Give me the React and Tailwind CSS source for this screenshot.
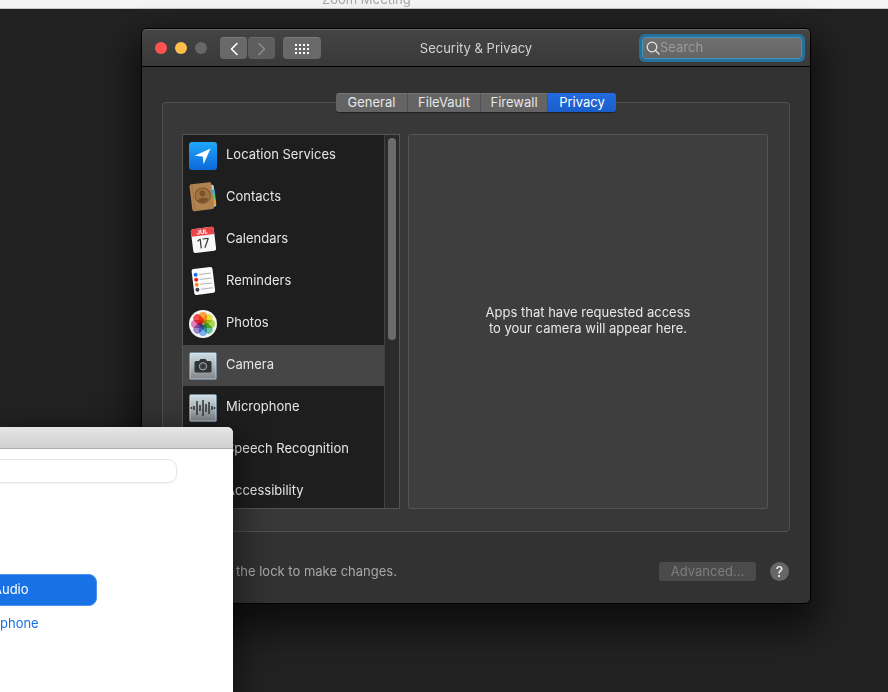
const LocationIcon = () => (
  <svg viewBox="0 0 28 28" className="w-7 h-7">
    <defs>
      <linearGradient id="loc" x1="0" y1="0" x2="0" y2="1">
        <stop offset="0" stopColor="#1fa8f8" />
        <stop offset="1" stopColor="#0c68dc" />
      </linearGradient>
    </defs>
    <rect width="28" height="28" rx="3" fill="url(#loc)" />
    <path d="M21.5 6.5 L5.5 13.8 L13.7 14.4 L14.6 22.2 Z" fill="#fff" />
  </svg>
);

const ContactsIcon = () => (
  <svg viewBox="0 0 28 28" className="w-7 h-7 overflow-visible">
    <g transform="rotate(-7 14 14)">
      <rect x="20" y="2" width="6" height="22" rx="1.5" fill="#c9d3d8" />
      <rect x="23" y="7" width="3.5" height="5" fill="#36a9e0" />
      <rect x="23" y="12" width="3.5" height="5" fill="#5ec45a" />
      <rect x="23" y="17" width="3.5" height="5" fill="#f09a2b" />
      <rect x="2" y="-1" width="22" height="27" rx="2" fill="#b08250" />
      <path d="M4.5 -1 V26" stroke="#a17645" strokeWidth="1" />
      <circle cx="14" cy="11.5" r="7.6" fill="#a2743f" stroke="#79532c" strokeWidth="1" />
      <circle cx="14" cy="9.4" r="3" fill="#79532c" />
      <path d="M8.5 16 C10 13 18 13 19.5 16 C17 19.3 11 19.3 8.5 16 Z" fill="#79532c" />
    </g>
  </svg>
);

const CalendarIcon = () => (
  <svg viewBox="0 0 28 28" className="w-7 h-7 overflow-visible">
    <g transform="rotate(-7 14 14)">
      <rect x="3" y="2" width="23" height="24" rx="2" fill="#f8f8f8" />
      <path d="M3 9.5 V4 A2 2 0 0 1 5 2 H24 A2 2 0 0 1 26 4 V9.5 Z" fill="#ec4548" />
      <text x="14" y="8" fontSize="6" fontWeight="700" textAnchor="middle" fill="#fff">JUL</text>
      <text x="14" y="22" fontSize="13" fontWeight="400" textAnchor="middle" fill="#333">17</text>
    </g>
  </svg>
);

const RemindersIcon = () => (
  <svg viewBox="0 0 28 28" className="w-7 h-7 overflow-visible">
    <g transform="rotate(-7 14 14)">
      <rect x="4" y="0" width="21" height="26" rx="2" fill="#fbfbfb" />
      <circle cx="7.5" cy="6" r="2" fill="#1b6af5" />
      <circle cx="7.5" cy="11" r="2" fill="#f5151c" />
      <circle cx="7.5" cy="16" r="2" fill="#fb8a24" />
      <circle cx="7.5" cy="21" r="2" fill="#35404e" />
      <path d="M11 6 H23 M11 11 H23 M11 16 H23 M11 21 H23" stroke="#b5b5b5" strokeWidth="1" />
    </g>
  </svg>
);

const PETALS = ['#fb9724', '#e6dc2c', '#a4d23a', '#55bd8c', '#63aae8', '#8a78cc', '#dd72b0', '#f43b34'];

const PhotosIcon = () => (
  <svg viewBox="0 0 28 28" className="w-7 h-7">
    <circle cx="14" cy="14" r="14" fill="#f3f3f3" />
    <g className="isolate">
      {PETALS.map((c, i) => (
        <rect key={c} x="10" y="2" width="8" height="11.5" rx="4" fill={c} fillOpacity="0.88"
          transform={`rotate(${i * 45} 14 14)`} className="mix-blend-multiply" />
      ))}
    </g>
  </svg>
);

const Plate = ({ children }) => (
  <svg viewBox="0 0 28 28" className="w-7 h-7">
    <defs>
      <linearGradient id="plate" x1="0" y1="0" x2="0" y2="1">
        <stop offset="0" stopColor="#cfdfe6" />
        <stop offset="0.5" stopColor="#abb5ba" />
        <stop offset="1" stopColor="#808385" />
      </linearGradient>
    </defs>
    <rect x="0.5" y="0.5" width="27" height="27" rx="1.5" fill="url(#plate)" stroke="#7289a0" />
    <rect x="1.5" y="1.5" width="25" height="25" fill="none" stroke="#fff" strokeOpacity="0.25" />
    {children}
  </svg>
);

const CameraIcon = () => (
  <Plate>
    <path d="M7 9 H10 L11.5 7 H16.5 L18 9 H21 A1.5 1.5 0 0 1 22.5 10.5 V19 A1.5 1.5 0 0 1 21 20.5 H7 A1.5 1.5 0 0 1 5.5 19 V10.5 A1.5 1.5 0 0 1 7 9 Z" fill="#303335" />
    <circle cx="14" cy="14.3" r="3.7" fill="#303335" stroke="#a9aeb1" strokeWidth="1" />
    <circle cx="14" cy="14.3" r="2.2" fill="none" stroke="#55595c" strokeWidth="0.8" />
  </Plate>
);

const MicrophoneIcon = () => (
  <Plate>
    <path d="M2.5 13 V15 M5 12 V16 M8 7 V21 M11 11 V17 M14 6 V22 M17 10 V18 M20 8 V20 M23 12 V16 M25.5 13 V15" stroke="#303335" strokeWidth="1.5" />
  </Plate>
);

const Chevron = ({ d }) => (
  <svg viewBox="0 0 8 14" className="w-2 h-3.5" fill="none" stroke="currentColor" strokeWidth="1.6" strokeLinecap="round" strokeLinejoin="round">
    <path d={d} />
  </svg>
);

const SERVICES = [
  { label: 'Location Services', Icon: LocationIcon },
  { label: 'Contacts', Icon: ContactsIcon },
  { label: 'Calendars', Icon: CalendarIcon },
  { label: 'Reminders', Icon: RemindersIcon },
  { label: 'Photos', Icon: PhotosIcon },
  { label: 'Camera', Icon: CameraIcon },
  { label: 'Microphone', Icon: MicrophoneIcon },
  { label: 'Speech Recognition', Icon: Plate },
  { label: 'Accessibility', Icon: Plate },
];

const TABS = [
  { label: 'General', width: 'w-[72px]' },
  { label: 'FileVault', width: 'w-[73px]' },
  { label: 'Firewall', width: 'w-[67px]' },
  { label: 'Privacy', width: 'w-[68px]' },
];

const TitleBar = () => (
  <header className="flex items-center h-[38px] px-[5px] rounded-t-[5px] border-t border-t-[#686868] border-b border-b-black bg-linear-to-b from-[#444444] to-[#393939]">
    <div className="flex flex-1 items-center">
      <div className="flex gap-2 ml-2">
        <button aria-label="Close" className="w-3 h-3 rounded-full bg-[#fe5450]" />
        <button aria-label="Minimize" className="w-3 h-3 rounded-full bg-[#fdbe4b]" />
        <button aria-label="Zoom" disabled className="w-3 h-3 rounded-full bg-[#676767]" />
      </div>
      <div className="flex gap-px ml-[13px]">
        <button aria-label="Back" className="flex items-center justify-center w-[27px] h-[22px] rounded border-t border-[#7c7c7c] bg-[#696969] text-white">
          <Chevron d="M7 1.5 L1.5 7 L7 12.5" />
        </button>
        <button aria-label="Forward" disabled className="flex items-center justify-center w-[27px] h-[22px] rounded border-t border-[#6d6d6d] bg-[#5e5e5e] text-[#8d8d8d]">
          <Chevron d="M1 1.5 L6.5 7 L1 12.5" />
        </button>
      </div>
      <button aria-label="Show All" className="flex items-center justify-center w-[38px] h-[22px] ml-2 rounded border-t border-[#7c7c7c] bg-[#696969]">
        <svg viewBox="0 0 14 10" className="w-3.5 h-2.5" fill="#fff">
          {[0, 4, 8].map((y) => [0, 4, 8, 12].map((x) => (
            <rect key={`${x}-${y}`} x={x} y={y} width="2" height="2" />
          )))}
        </svg>
      </button>
    </div>
    <h1 className="pt-0.5 text-[13px] text-[#d2d2d2]">Security &amp; Privacy</h1>
    <div className="flex flex-1 justify-end">
      <label className="flex items-center w-40 h-[22px] mr-[3px] pl-[3px] rounded-[3px] border border-[#4394c0] bg-linear-to-b from-[#707070] to-[#656565] ring-3 ring-[#26719a]">
        <svg viewBox="0 0 14 14" className="w-3.5 h-3.5 shrink-0" fill="none" stroke="#e4e4e4" strokeWidth="1.3" strokeLinecap="round">
          <circle cx="6" cy="6" r="4.8" />
          <path d="M9.5 9.5 L13 13" />
        </svg>
        <input type="text" placeholder="Search" aria-label="Search"
          className="w-full min-w-0 bg-transparent text-[13px] text-white placeholder:text-[#9b9b9b] outline-none" />
      </label>
    </div>
  </header>
);

const Tabs = () => (
  <div role="tablist" className="relative flex mx-auto w-fit h-[19px] rounded-[3px] overflow-hidden shadow-[0_1px_1px_#222]">
    {TABS.map((t) => (
      <button key={t.label} role="tab" aria-selected={t.label === 'Privacy'}
        className={`${t.width} text-[13px] leading-[19px] ${t.label === 'Privacy' ? 'bg-linear-to-b from-[#226be0] to-[#1b5dca] text-white' : 'bg-[#646464] text-[#e6e6e6] border-r border-r-[#525252] shadow-[inset_0_1px_0_#767676]'}`}>
        {t.label}
      </button>
    ))}
  </div>
);

const ServiceList = () => (
  <div className="flex w-[218px] h-[375px] border border-[#555555] bg-[#1e1e1e]">
    <ul className="flex-1 overflow-hidden">
      {SERVICES.map(({ label, Icon }) => (
        <li key={label} className="h-[42px]">
          <button className={`flex items-center w-full h-[41px] pl-1.5 gap-[9px] text-[13px] text-[#e6e6e6] ${label === 'Camera' ? 'bg-[#464646]' : ''}`}>
            <Icon />
            <span className="pb-0.5">{label}</span>
          </button>
        </li>
      ))}
    </ul>
    <div className="w-[15px] border-l border-[#414141] bg-[#2b2b2b] pt-[3px]">
      <div className="w-2 h-[202px] mx-auto rounded-full bg-[#6b6b6b]" />
    </div>
  </div>
);

const PreferencesWindow = () => (
  <main className="ml-[141px] mr-[77px] mt-[19px] rounded-md border border-black bg-[#323232] shadow-[0_18px_36px_8px_rgba(0,0,0,0.6)]">
    <TitleBar />
    <div className="px-5 pt-[26px] pb-[21px]">
      <Tabs />
      <section className="-mt-2.5 px-[19px] pt-[31px] pb-[22px] rounded border border-[#505050] bg-[#383838]">
        <div className="flex gap-2">
          <ServiceList />
          <div className="flex flex-1 items-center justify-center mr-0.5 pb-1 rounded-[3px] border border-[#545454] bg-[#3e3e3e]">
            <p className="text-[13px] leading-4 text-center text-[#e8e8e8]">
              Apps that have requested access<br />to your camera will appear here.
            </p>
          </div>
        </div>
      </section>
      <footer className="flex items-center mt-[29px] pr-px">
        <p className="flex-1 pl-10 pt-px text-[13px] text-[#a8a8a8]">Click the lock to make changes.</p>
        <button disabled className="w-[97px] h-[19px] rounded-[3px] bg-[#4b4b4b] text-[13px] leading-[19px] text-[#7d7d7d]">Advanced...</button>
        <button aria-label="Help" className="w-[19px] h-[19px] ml-3.5 rounded-full bg-[#666666] text-sm leading-[19px] font-medium text-[#eeeeee]">?</button>
      </footer>
    </div>
  </main>
);

const AudioDialog = () => (
  <div role="dialog" aria-label="Audio" className="absolute left-0 top-[427px] bottom-0 w-[233px] rounded-tr-md bg-white overflow-hidden shadow-[0_10px_30px_6px_rgba(0,0,0,0.5)]">
    <div className="h-[22px] border-b border-[#adadad] bg-linear-to-b from-[#e6e6e6] to-[#cfcfcf]" />
    <input type="text" aria-label="Device"
      className="block w-[189px] h-6 -ml-3 mt-2.5 px-4 rounded-[9px] border border-[#e6e6ea] bg-white shadow-xs outline-none" />
    <button className="block w-[109px] h-8 -ml-3 mt-[91px] pl-1 rounded-lg border border-[#4c93ee] bg-[#1872e6] text-left text-[13px] text-white">
      Audio
    </button>
    <a href="#phone" className="block w-fit mt-[7px] text-[13px] leading-5 text-[#1872e6]">phone</a>
  </div>
);

export default function App() {
  return (
    <div className="relative h-screen overflow-hidden bg-[#222222] font-['Inter','Liberation_Sans',sans-serif]">
      <div className="h-[9px] pl-[322px] overflow-hidden border-b border-[#c8c8c8] bg-[#f5f5f5]">
        <p className="-mt-[9px] text-[13px] leading-4 text-[#a6a6a6]">Zoom Meeting</p>
      </div>
      <PreferencesWindow />
      <AudioDialog />
    </div>
  );
}
